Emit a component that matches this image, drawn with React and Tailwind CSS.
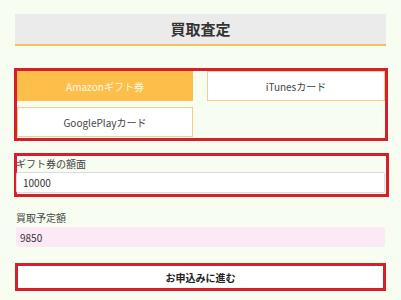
const font = { fontFamily: '"Noto Sans CJK JP", "Noto Sans", sans-serif' };

export default function App() {
  return (
    <div style={font} className="w-[401px] h-[300px] overflow-hidden bg-[#f8fdf1] pt-[14px] text-[#444]">
      {/* title */}
      <div className="mx-[15px] h-[32px] bg-[#ebebeb] border-b-[2px] border-[#f1c15d] flex items-center justify-center text-[15px] font-bold text-[#333]">
        買取査定
      </div>

      {/* card type */}
      <div className="mt-[22px] ml-[14px] w-[374px] border-[3px] border-[#d71f2b] pb-[1px]">
        <div className="grid grid-cols-[176px_178px] gap-x-[14px] gap-y-[6px]">
          <button className="h-[30px] bg-[#fdbf4a] text-[#fff8e8] text-[10px] flex items-center justify-center">
            Amazonギフト券
          </button>
          <button className="h-[30px] bg-white border border-[#f0cf8f] text-[10px] flex items-center justify-center">
            iTunesカード
          </button>
          <button className="h-[30px] bg-white border border-[#f0cf8f] text-[10px] flex items-center justify-center">
            GooglePlayカード
          </button>
        </div>
      </div>

      {/* face value */}
      <div className="mt-[12px] ml-[14px] w-[375px] border-[3px] border-[#d71f2b] pb-[1px]">
        <div className="h-[16px] text-[10px] leading-[16px] -ml-[1px]">ギフト券の額面</div>
        <div className="h-[21px] -ml-[1px] mr-[1px] bg-white border border-[#dcdcdc] rounded-[2px] pl-[6px] flex items-center text-[10px] text-[#333]">
          10000
        </div>
      </div>

      {/* estimate */}
      <div className="mt-[14px] ml-[16px] text-[10px] leading-[14px]">買取予定額</div>
      <div className="mt-[2px] ml-[16px] w-[369px] h-[20px] bg-[#fde9f6] rounded-[2px] pl-[4px] flex items-center text-[10px] text-[#333]">
        9850
      </div>

      {/* submit */}
      <button className="mt-[16px] ml-[15px] w-[371px] h-[28px] bg-white border-[3px] border-[#d71f2b] flex items-center justify-center text-[10px] font-bold text-[#222]">
        お申込みに進む
      </button>
    </div>
  );
}
